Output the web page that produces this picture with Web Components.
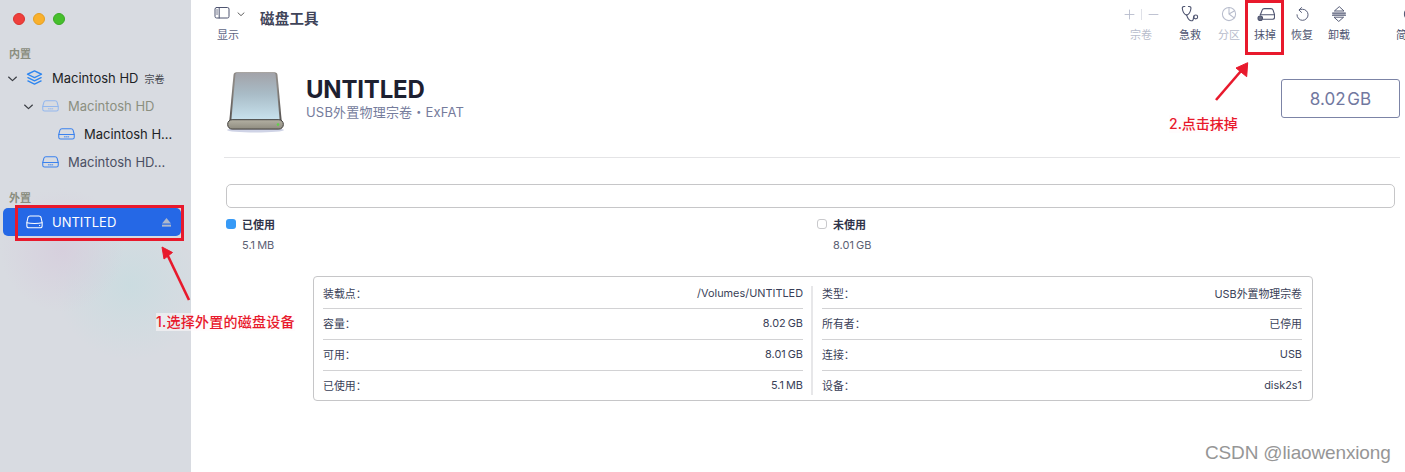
<!DOCTYPE html>
<html lang="zh"><head><meta charset="utf-8"><title>磁盘工具</title>
<style>
html,body{margin:0;padding:0;background:#fff;height:472px;overflow:hidden}
body{font-family:Inter,"Noto Sans CJK SC",sans-serif}
</style></head><body>
<disk-app>
  <side-bar slot="side">
    <side-head>内置</side-head>
    <side-row indent="6" chev icon="stack">Macintosh HD<span slot="tag">宗卷</span></side-row>
    <side-row indent="22" chev icon="drive" dim>Macintosh HD</side-row>
    <side-row indent="58" icon="drive" tone="dark">Macintosh H...</side-row>
    <side-row indent="42" icon="drive" tone="slate">Macintosh HD...</side-row>
    <side-head second>外置</side-head>
    <side-row indent="26" icon="drivesel" selected eject>UNTITLED</side-row>
  </side-bar>
  <tool-bar slot="tools"></tool-bar>
  <disk-head slot="head"></disk-head>
  <usage-bar slot="usage"></usage-bar>
  <info-table slot="table"></info-table>
</disk-app>
<note-layer></note-layer>
<script>
const DOME='<path d="M3.7 2.6h8.6c1 0 1.6.5 1.9 1.3L15.3 8v2.6c0 1-.6 1.7-1.7 1.7H2.4c-1.1 0-1.7-.7-1.7-1.7V8l1.1-4.1C2.1 3.1 2.7 2.6 3.7 2.6Z"/><path d="M.9 8h14.2"/>';
const ICONS={
stack:'<path d="M8 .9 14.6 4 8 7.2 1.4 4Z"/><path d="M1.8 7.2 8 10.2l6.2-3"/><path d="M1.8 10.3 8 13.3l6.2-3"/>',
drive:DOME+'<path d="M6 10.2h.7M7.7 10.2h.7M9.4 10.2h.7" stroke-width=".9"/>',
drivesel:'<path d="M3.8 1.8h8.4c1 0 1.6.5 1.9 1.3L15.2 8v3c0 1.2-.7 2-1.9 2H2.7c-1.2 0-1.9-.8-1.9-2V8l1.1-4.9C2.2 2.3 2.8 1.8 3.8 1.8Z"/><path d="M1 8.2c3 1 11 1 14 0"/><path d="M12.6 10.9h.4" stroke-width=".9"/>',
sidebar:'<rect x="1" y="1.5" width="14" height="10.5" rx="1.6"/><path d="M5.2 1.5V12"/><path d="M2.5 4h1.2M2.5 6h1.2M2.5 8h1.2" stroke-width=".8"/>',
chev:'<path d="M3.2 6.2 8 10.6l4.8-4.4" stroke-width="1.5"/>',
plus:'<path d="M8 2.5v11M2.5 8h11"/>',
minus:'<path d="M2.5 8h11"/>',
steth:'<path d="M3.4 1.3H2.6C1.5 1.3 1 2.2 1.2 3.3 1.6 6 3 8.5 5 9c2-.5 3.4-3 3.8-5.7.2-1.1-.3-2-1.4-2h-.8"/><path d="M5 9c.7 2.2 1.8 4.7 3.9 5 1.6.2 2.2-1 2.2-2.6 0-.7.1-1.2.4-1.6"/><circle cx="13.1" cy="10.6" r="1.7"/>',
clock:'<circle cx="8" cy="8" r="6.6"/><path d="M8 1.4V8l5.2 3.9M8 8l5.6-3.2"/>',
erase:'<path d="M3.6 8.4 5.2 4.3C5.5 3.5 6.1 3 7 3h5.6c.9 0 1.5.5 1.8 1.3L15.6 8v2.4c0 1-.6 1.6-1.6 1.6H6.2"/><path d="M3.6 8.2h12"/><circle cx="3.6" cy="11.2" r="1.9" fill="#6a6f82"/>',
restore:'<path d="M4.6 3.2C5.5 2.7 6.7 2.4 8 2.4a5.9 5.9 0 1 1-5.9 5.9"/><path d="M7 .6 4.2 3.2 7 5.8"/>',
unmount:'<path d="M8 .9 3.4 5h9.2Z"/><path d="M1.6 7h12.8M1.6 9.2h12.8" stroke-width="1.25"/><path d="M3.4 11.2h9.2L8 15.2Z"/>',
info:'<circle cx="8" cy="8" r="6.6"/><path d="M8 7v4.5M8 4.3v1"/>'
};
function svg(name,size,sw){return `<svg viewBox="0 0 16 16" width="${size}" height="${size}" fill="none" stroke="currentColor" stroke-width="${sw||1.1}" stroke-linecap="round" stroke-linejoin="round" aria-hidden="true">${ICONS[name]}</svg>`}
function def(n,html,extra){customElements.define(n,class extends HTMLElement{constructor(){super();this.attachShadow({mode:'open'})}connectedCallback(){this.shadowRoot.innerHTML=typeof html==='function'?html(this):html;extra&&extra(this)}})}

def('disk-app',`<style>
:host{display:flex;width:1405px;height:472px;overflow:hidden}
.side{flex:none;width:191px}
.main{flex:1;min-width:0;display:flex;flex-direction:column}
</style><div class="side"><slot name="side"></slot></div>
<div class="main"><slot name="tools"></slot><slot name="head"></slot><slot name="usage"></slot><slot name="table"></slot></div>`);

def('side-bar',`<style>
:host{display:block;height:472px;box-sizing:border-box;padding-top:13px;
background:radial-gradient(circle at 62px 250px,rgba(214,204,220,.75),transparent 62px),radial-gradient(circle at 130px 285px,rgba(200,220,224,.8),transparent 75px),#d8dbe1}
.lights{display:flex;gap:8px;padding-left:13px;height:12px;margin-bottom:22px}
i{width:12px;height:12px;border-radius:50%;display:block;box-sizing:border-box}
.r{background:#ef3f3c;border:.5px solid #d9332f}.y{background:#f9b02c;border:.5px solid #e39f22}.g{background:#46bf2c;border:.5px solid #3aa925}
</style><div class="lights"><i class="r"></i><i class="y"></i><i class="g"></i></div><slot></slot>`);

def('side-head',h=>`<style>
:host{display:block;font-size:11px;line-height:14px;color:#8a8d7e;font-weight:600;padding-left:9px;margin-top:${h.hasAttribute('second')?'15px':'0'};margin-bottom:3px}
</style><slot></slot>`);

def('side-row',h=>{
 const sel=h.hasAttribute('selected'),dim=h.hasAttribute('dim'),ind=+h.getAttribute('indent'),tone=h.getAttribute('tone');
 const text=sel?'#fff':dim?'#8b8f80':tone==='slate'?'#4a4f63':'#1d1f26';
 const ic=sel?'#fff':dim?'#94b8ee':'#3b82ee';
 const stack=h.getAttribute('icon')==='stack';
 const isChev=h.hasAttribute('chev');
 return `<style>
:host{display:flex;align-items:center;height:28px;box-sizing:border-box;margin:0 10px 0 3px;position:relative;font-size:13px;color:${text};padding-left:${ind-3}px;${sel?'background:#2568e6;border-radius:5px;':''}}
.ch{width:13px;height:13px;color:#3b3e44;margin-right:7px;display:flex}
.ic{display:flex;color:${stack?'#2e86f0':ic};margin-right:9px}
.lbl{white-space:nowrap}
::slotted([slot=tag]){font-size:10px;color:#45484f;margin-left:6px}
.ej{position:absolute;right:10px;top:10px;width:9px;height:9px}
</style>${isChev?`<span class="ch">${svg('chev',13)}</span>`:''}<span class="ic">${svg(h.getAttribute('icon'),17,stack?1.3:1)}</span><span class="lbl"><slot></slot></span><slot name="tag"></slot>
${h.hasAttribute('eject')?'<svg class="ej" viewBox="0 0 10 10" fill="#aeb8cc"><path d="M5 0 10 6H0Z"/><rect y="7.4" width="10" height="2.2"/></svg>':''}`});

def('tool-item',h=>{
 const off=h.hasAttribute('off');
 return `<style>
:host{display:flex;flex-direction:column;align-items:center;flex:none;width:${h.getAttribute('w')}px;height:54px;box-sizing:border-box;padding-top:6px;color:${off?'#b7bccc':'#4e5470'};font-size:11px;line-height:14px}
.i{height:16px;display:flex;align-items:center;justify-content:center;gap:3px;margin-bottom:6px}
.lab{white-space:nowrap}
</style><div class="i"><slot></slot></div><div class="lab">${h.getAttribute('label')}</div>`});

def('tool-bar',`<style>
:host{display:flex;flex:none;height:54px;overflow:hidden}
.left{display:flex;flex:none;padding-left:23px}
.show{width:36px;display:flex;flex-direction:column;color:#4e5470;padding-top:6px}
.show .top{display:flex;align-items:center;gap:6px;height:16px;margin-bottom:6px}
.show .top span{display:flex}
.show .lab{font-size:11px;line-height:14px;padding-left:3px;color:#5d6484}
h1{margin:0 0 0 10px;padding-top:9px;font-size:14.5px;line-height:20px;font-weight:700;color:#3f4459;letter-spacing:.2px}
.sp{flex:1}
.right{display:flex;flex:none;width:288px;overflow:hidden}
.p{display:flex;align-items:center}
.sep{width:1px;height:11px;background:#dfe1e8;margin:0 5px}
.clip{flex:none;width:44px;overflow:hidden;padding-left:35px;box-sizing:border-box}
</style>
<div class="left"><div class="show"><div class="top"><span>${svg('sidebar',16,1)}</span><span style="color:#555">${svg('chev',10,1)}</span></div><div class="lab">显示</div></div><h1>磁盘工具</h1></div>
<div class="sp"></div>
<div class="right">
<tool-item w="48" label="宗卷" off><span class="p">${svg('plus',13,1.1)}<span class="sep"></span>${svg('minus',13,1.1)}</span></tool-item>
<tool-item w="50" label="急救"><span class="p">${svg('steth',18,1)}</span></tool-item>
<tool-item w="28" label="分区" off><span class="p">${svg('clock',16,1.05)}</span></tool-item>
<tool-item w="44" label="抹掉"><span class="p">${svg('erase',19,.95)}</span></tool-item>
<tool-item w="30" label="恢复"><span class="p">${svg('restore',15,1)}</span></tool-item>
<tool-item w="44" label="卸载"><span class="p">${svg('unmount',16,.95)}</span></tool-item>
<div class="clip"><tool-item w="22" label="简介"><span class="p" style="margin-left:8px">${svg('info',16,1.05)}</span></tool-item></div>
</div>`);

def('disk-head',`<style>
:host{display:flex;flex:none;box-sizing:border-box;height:104px;margin:0 5px 0 33px;border-bottom:1px solid #e4e4e6;padding:18px 0 0 3px}
.pic{flex:none;width:60px;height:62px;margin-right:19px}
.t{flex:1;padding-top:4px}
h2{margin:0;font-size:24px;line-height:28px;font-weight:700;color:#1d2030;letter-spacing:-.2px}
p{margin:0;font-size:13px;line-height:16px;color:#757c9c;letter-spacing:.2px}
.cap{flex:none;width:119px;height:39px;box-sizing:border-box;margin-top:7px;border:1px solid #7c84a6;border-radius:3px;display:flex;align-items:center;justify-content:center;font-size:17px;word-spacing:-3px;color:#7178a0}
</style>
<svg class="pic" viewBox="0 0 60 62" aria-hidden="true"><defs>
<linearGradient id="bd" x1="0" y1="0" x2="0" y2="1"><stop offset="0" stop-color="#a2a3a9"/><stop offset=".45" stop-color="#a9bcc7"/><stop offset="1" stop-color="#c8e2ee"/></linearGradient>
<linearGradient id="ed" x1="0" y1="0" x2="1" y2="0"><stop offset="0" stop-color="#4b4846"/><stop offset=".08" stop-color="#8b8783"/><stop offset=".92" stop-color="#8b8783"/><stop offset="1" stop-color="#4b4846"/></linearGradient>
<linearGradient id="bt" x1="0" y1="0" x2="0" y2="1"><stop offset="0" stop-color="#b3b0a3"/><stop offset="1" stop-color="#8f8c80"/></linearGradient></defs>
<ellipse cx="28.5" cy="58" rx="28.5" ry="2.4" fill="#cfd3e6"/>
<path d="M6.5 3c.2-1.8 1.2-2.8 3-2.8h38c1.8 0 2.8 1 3 2.8l4.2 46H2.3Z" fill="url(#ed)"/>
<path d="M8.4 2.6C8.6 1.5 9.2 1 10.2 1h36.6c1 0 1.6.5 1.8 1.6L52.6 48H4.4Z" fill="url(#bd)"/>
<rect x=".7" y="47.7" width="55.6" height="9.4" rx="4.4" fill="url(#bt)" stroke="#3d3b38" stroke-width="1"/>
<circle cx="51" cy="52.6" r="1.3" fill="#5fd14a"/></svg>
<div class="t"><h2>UNTITLED</h2><p>USB外置物理宗卷・ExFAT</p></div>
<div class="cap">8.02 GB</div>`);

def('usage-bar',`<style>
:host{display:block;flex:none;padding:26px 10px 0 35px}
.bar{height:24px;box-sizing:border-box;border:1px solid #c6c6c8;border-radius:5px;margin-bottom:6px}
.grid{display:grid;grid-template-columns:591px 1fr}
.l{display:grid;grid-template-columns:16px 1fr;grid-template-rows:20px 22px;align-items:center;font-size:11px}
.d{width:10px;height:10px;border-radius:3px;box-sizing:border-box;background:#379af6}
.d.e{background:#fff;border:1px solid #c9c9cc}
b{font-weight:700;color:#30344a}
span{grid-column:2;color:#5c6174;font-size:11px;word-spacing:-1px}
</style><div class="bar"></div>
<div class="grid">
<div class="l"><i class="d"></i><b>已使用</b><span>5.1 MB</span></div>
<div class="l"><i class="d e"></i><b>未使用</b><span>8.01 GB</span></div>
</div>`);

def('info-table',()=>{
 const col=r=>`<div class="col">${r.map(([a,b])=>`<div class="row"><span>${a}</span><span>${b}</span></div>`).join('')}</div>`;
 return `<style>
:host{display:flex;flex:none;box-sizing:border-box;width:1000px;height:125px;margin:20px 0 0 122px;border:1px solid #c6c6c8;border-radius:4px;padding:1px 9px 0;font-size:10.9px;color:#3a3f58}
.col{width:480px;flex:none}
.row{display:flex;justify-content:space-between;align-items:center;height:30px;border-bottom:1px solid #d2d2d4;white-space:nowrap;word-spacing:-1px}
.row+.row{height:28px;padding-bottom:2px}
.row:last-child{border-bottom:0}
.div{flex:none;width:2px;background:#e7e7e9;margin:8px 9px 5px 8px}
</style>${col([['装载点：','/Volumes/UNTITLED'],['容量：','8.02 GB'],['可用：','8.01 GB'],['已使用：','5.1 MB']])}<div class="div"></div>${col([['类型：','USB外置物理宗卷'],['所有者：','已停用'],['连接：','USB'],['设备：','disk2s1']])}`});

def('note-layer',`<style>
:host{position:absolute;left:0;top:0;width:1405px;height:472px;display:block;pointer-events:none;font-family:Inter,"Noto Sans CJK SC",sans-serif}
.box{position:absolute;border:3px solid #e8192c;box-sizing:border-box}
.t{position:absolute;color:#e8192c;font-size:14px;line-height:18px;font-weight:500;white-space:nowrap;background:rgba(255,250,252,.55)}
svg{position:absolute;left:0;top:0}
.wm{position:absolute;left:1205px;top:441px;font-family:"Liberation Sans",sans-serif;font-size:19px;line-height:24px;color:#969696;white-space:nowrap;letter-spacing:-.15px}
</style>
<div class="box" style="left:15px;top:205px;width:169px;height:36px"></div>
<div class="box" style="left:1245px;top:0;width:39px;height:55px"></div>
<svg width="1405" height="472" aria-hidden="true"><g stroke="#e8192c" stroke-width="2.6" fill="#e8192c">
<path d="M189 300 167 254" fill="none"/><path d="M162 247 172.5 252.5 164 259Z" stroke-width="1"/>
<path d="M1216 100 1241 71" fill="none"/><path d="M1247.7 62.7 1236 68 1246.7 76.7Z" stroke-width="1"/></g></svg>
<div class="t" style="left:156px;top:313px;letter-spacing:.25px">1.选择外置的磁盘设备</div>
<div class="t" style="left:1169px;top:115px">2.点击抹掉</div>
<div class="wm">CSDN @liaowenxiong</div>`);
</script>
</body></html>
